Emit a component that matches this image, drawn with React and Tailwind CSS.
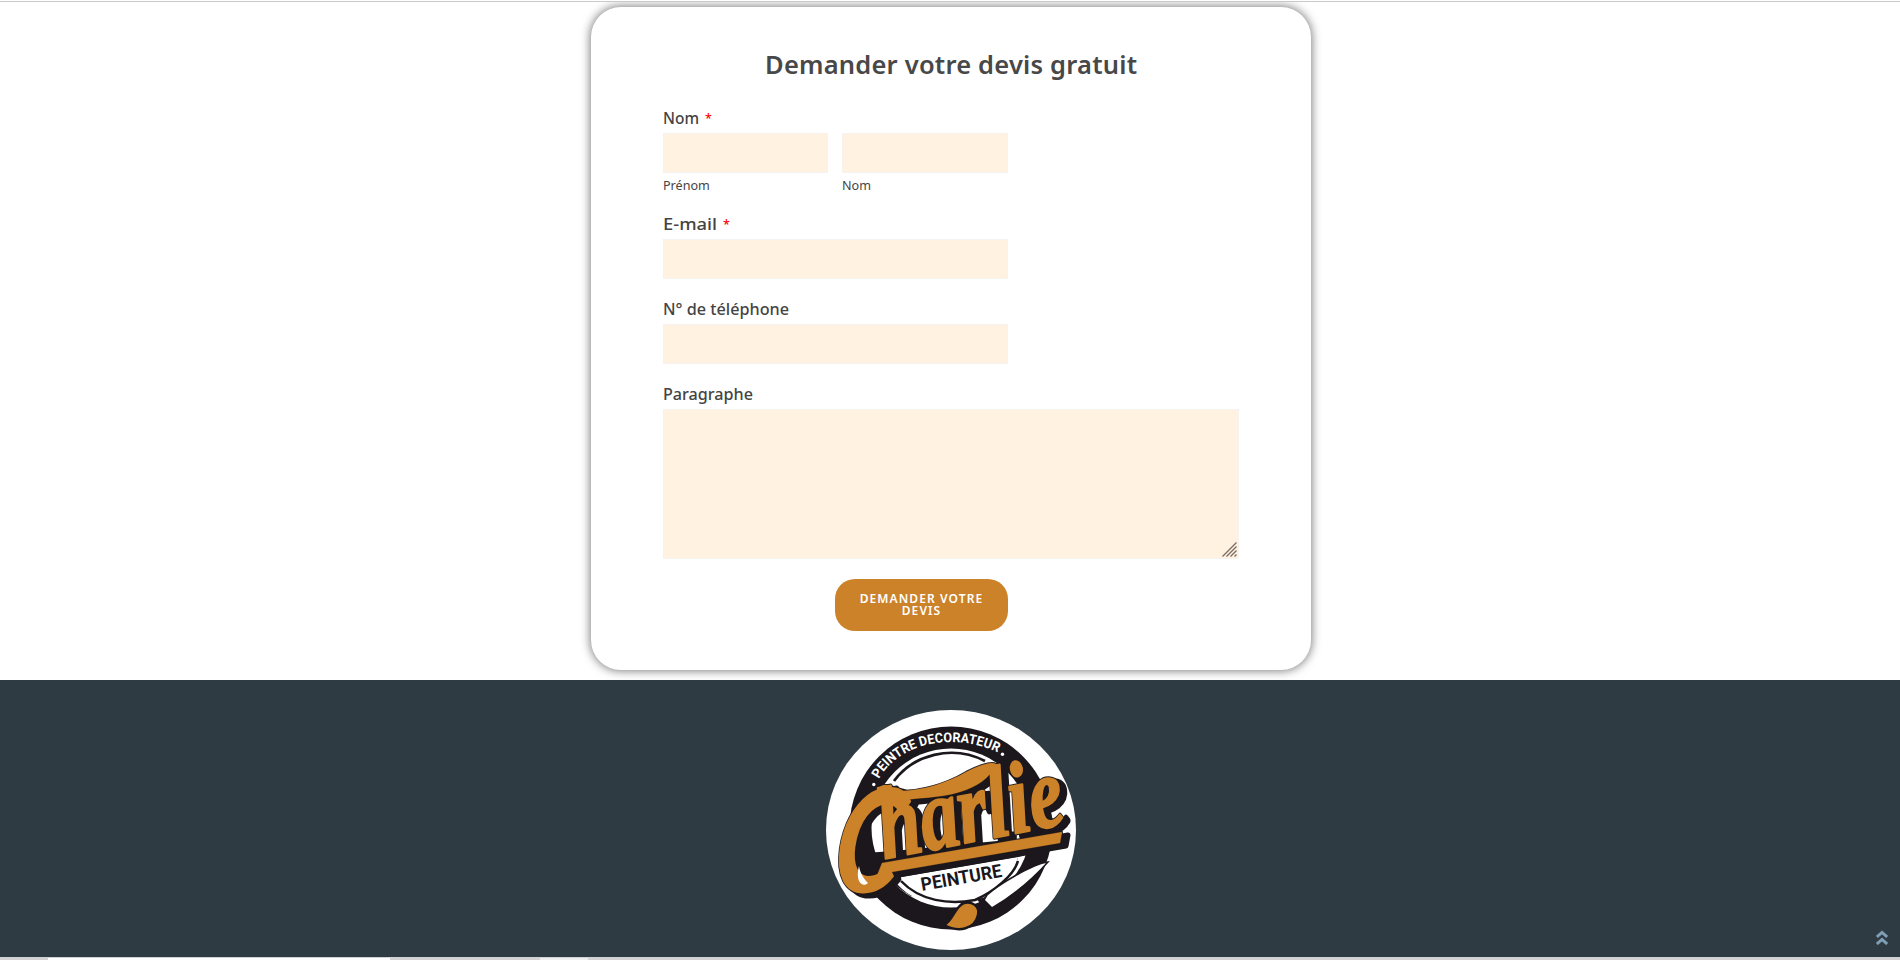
import React from "react";

function Label({ text, required, width, size = 16 }) {
  return (
    <svg className="block h-6 w-[240px] overflow-visible" role="presentation">
      <text x="0" y="17" fontSize={size} fontWeight="500" fontFamily="'Noto Sans', sans-serif" fill="#444444" textLength={width} lengthAdjust="spacingAndGlyphs">{text}</text>
      {required && <text x={width + 6} y="16" fontSize="12.5" fontWeight="500" fontFamily="'Noto Sans', sans-serif" fill="#ff0000">*</text>}
    </svg>
  );
}

const inputClass = "block h-[40px] border border-[#f5f2f0] bg-[#fff2e0] outline-none";

function Swashes({ fill, grow }) {
  return (
    <g fill={fill} stroke={fill} strokeWidth={grow} strokeLinejoin="round">
      <path d="M74 97C66 91 68 85 76 85L87 91C112 91 137 83 156 72C170 65 181 61 186 64C181 78 166 87 150 92C128 99 106 97 91 101Z" />
      <path d="M72 163L252 132L250 143L82 172C78 177 70 180 66 178Z" />
    </g>
  );
}

function Letters({ color, grow }) {
  return (
    <g fill={color} stroke={color} strokeLinejoin="round" fontStyle="italic">
      <text transform="translate(20 192) rotate(-1) skewX(-9) scale(0.75 1)" fontFamily="Lato, sans-serif" fontSize="141" fontWeight="700" strokeWidth={grow + 2}>C</text>
      <text transform="translate(74 159) rotate(-11)" fontFamily="'Liberation Serif', serif" fontSize="102" fontWeight="700" strokeWidth={grow + 2.2} textLength="187" lengthAdjust="spacingAndGlyphs">harlie</text>
    </g>
  );
}

function Logo() {
  return (
    <svg className="block h-[240px] w-[250px] overflow-visible" viewBox="16 10 250 240" role="img" aria-label="Charlie Peinture">
      <defs>
        <path id="ring-text" d="M69 79C81 57 108 42 141 42C160 42 177 47 189 53" />
      </defs>
      <ellipse cx="141" cy="130" rx="125" ry="120" fill="#fff" />
      <circle cx="141" cy="128" r="101.5" fill="#1b171c" />
      <circle cx="141" cy="128" r="79.5" fill="#fff" />
      <path d="M84 81C103 55 142 44 175 61" fill="none" stroke="#1b171c" strokeWidth="2.7" />
      <path d="M55 153L83 151L238 136L236 148L208 157C207 164 202 174 193 183L180 201L101 196C90 190 79 180 73 172Z" fill="#1b171c" />
      <path d="M86 178L208 157C205 172 191 187 177 196C146 212 108 208 86 183Z" fill="#fff" />
      <path d="M91 181C110 201 139 205 165 200C184 192 204 175 208 161" fill="none" stroke="#1b171c" strokeWidth="2.5" />
      <text fill="#fff" fontFamily="'Roboto', sans-serif" fontSize="13.5" fontWeight="700">
        <textPath href="#ring-text" textLength="133" lengthAdjust="spacingAndGlyphs">PEINTRE DECORATEUR</textPath>
      </text>
      <circle cx="63.8" cy="84.5" r="1.7" fill="#fff" />
      <circle cx="192.5" cy="54.3" r="1.7" fill="#fff" />
      <g transform="translate(6 3)">
        <Swashes fill="#1b171c" grow={5} />
        <Letters color="#1b171c" grow={4} />
      </g>
      <Swashes fill="#1b171c" grow={2} />
      <Letters color="#1b171c" grow={2} />
      <Letters color="#cc8229" grow={0} />
      <Swashes fill="#cc8229" grow={0.2} />
      <path d="M49 166C50 173 54 179 58 183C55 186 51 185 49 181C47 176 48 170 49 166Z" fill="#fff" />
      <text transform="translate(112 191) rotate(-10)" fill="#1b171c" fontFamily="Roboto, sans-serif" fontSize="18.5" fontWeight="700" textLength="82" lengthAdjust="spacingAndGlyphs">PEINTURE</text>
      <path d="M238 162C222 164 188 185 177 195L174 200L182 208C199 198 220 182 238 162Z" fill="#fff" stroke="#1b171c" strokeWidth="1.5" />
      <path d="M167 199L173 198L179 208L174 210Z" fill="#1b171c" />
      <path d="M134 225C143 221 145 206 154 203C162 201 170 206 168 215C165 229 149 233 134 225Z" fill="#cc8229" stroke="#1b171c" strokeWidth="2.5" />
    </svg>
  );
}

export default function App() {
  return (
    <div className="flex h-[960px] w-[1900px] flex-col overflow-hidden bg-white font-['Noto_Sans',sans-serif] text-[#444444]">
      <div className="relative z-10 h-[2px] shrink-0 border-b border-[#c6cac8] bg-white" />
      <main className="flex h-[678px] shrink-0 justify-center overflow-hidden pt-[5px] pl-[2px]">
        <form className="h-[663px] w-[720px] rounded-[30px] bg-white px-[72px] pt-[40px] shadow-[0_0_10px_1px_rgba(0,0,0,0.5)]">
          <svg className="block h-[60px] w-[576px]" role="presentation">
            <text x="102" y="27" fontFamily="'Noto Sans', sans-serif" fontSize="25.5" fontWeight="600" fill="#484848" textLength="372">Demander votre devis gratuit</text>
          </svg>
          <Label text="Nom" required width={36} />
          <div className="mt-[2px] flex gap-[14px]">
            <div className="w-[165px]">
              <input aria-label="Prénom" className={inputClass + " w-[165px]"} />
              <div className="mt-[4px] text-[12.6px] leading-[18px]">Prénom</div>
            </div>
            <div className="w-[166px]">
              <input aria-label="Nom" className={inputClass + " w-[166px]"} />
              <div className="mt-[4px] text-[12.6px] leading-[18px]">Nom</div>
            </div>
          </div>
          <div className="mt-[18px]">
            <Label text="E-mail" required width={54} />
            <input aria-label="E-mail" className={inputClass + " mt-[2px] w-[345px]"} />
          </div>
          <div className="mt-[19px]">
            <Label text="N° de téléphone" width={126} />
            <input aria-label="Téléphone" className={inputClass + " mt-[2px] w-[345px]"} />
          </div>
          <div className="mt-[19px]">
            <Label text="Paragraphe" width={90} />
            <div className="mt-[2px] flex h-[150px] w-[576px] items-end justify-end border border-[#f5f2f0] bg-[#fff2e0] pr-[1px] pb-[1px]">
              <svg width="15" height="15" viewBox="0 0 15 15" stroke="#776b64" strokeWidth="1.3">
                <path d="M0.5 14.5L14.5 0.5M4.5 14.5L14.5 4.5M8.5 14.5L14.5 8.5M12.5 14.5L14.5 12.5" />
              </svg>
            </div>
          </div>
          <button type="button" className="mt-[20px] ml-[172px] flex h-[52px] w-[173px] flex-col items-center rounded-[20px] bg-[#cc8229] pt-[14px] text-[12px] leading-[12px] font-semibold tracking-[1.1px] text-white">
            <span>DEMANDER VOTRE</span>
            <span>DEVIS</span>
          </button>
        </form>
      </main>
      <footer className="relative flex h-[277px] shrink-0 justify-center bg-[#2f3b43] pt-[30px] pl-[2px]">
        <Logo />
        <svg className="absolute right-[12px] bottom-[12px]" width="12" height="15" viewBox="0 0 12 15" fill="none" stroke="#7f9fb5" strokeWidth="3">
          <path d="M0.8 7L6 2.4L11.2 7M0.8 14L6 9.4L11.2 14" />
        </svg>
      </footer>
      <div className="flex h-[3px] shrink-0 border-t border-[#ccd2d6] bg-[#d4d2d2]">
        <div className="ml-[48px] h-[2px] w-[342px] bg-white" />
        <div className="ml-[150px] h-[2px] w-[48px] bg-[#efefef]" />
      </div>
    </div>
  );
}
